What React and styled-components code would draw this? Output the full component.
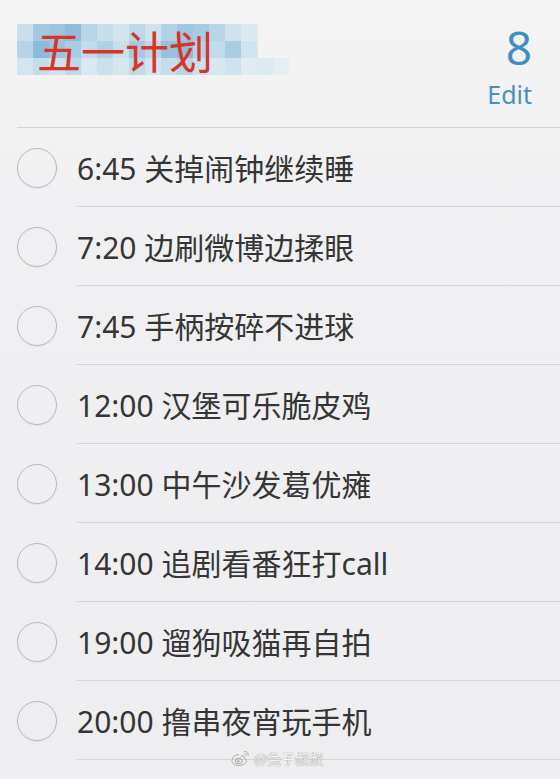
import React from "react";
import styled, { createGlobalStyle } from "styled-components";

const GlobalStyle = createGlobalStyle`
  html, body {
    margin: 0;
    padding: 0;
    background: #f0f0f2;
  }
  body {
    font-family: "Noto Sans", "Noto Sans CJK SC", sans-serif;
  }
`;

const Page = styled.div`
  position: relative;
  width: 560px;
  height: 779px;
  overflow: hidden;
  background: linear-gradient(180deg, #f4f4f5 0%, #f0f0f2 30%, #eeeef0 100%);
`;

const Header = styled.header`
  position: relative;
  display: flex;
  justify-content: space-between;
  align-items: flex-start;
  height: 127px;
  margin-left: 17px;
  border-bottom: 1px solid #d4d4d6;
`;

const Mosaic = styled.svg`
  position: absolute;
  left: 0;
  top: 24px;
`;

const Title = styled.h1`
  position: relative;
  margin: 28px 0 0 20px;
  font-family: "Noto Sans CJK SC", sans-serif;
  font-size: 44px;
  line-height: 44px;
  font-weight: 400;
  color: #d8342a;
`;

const Side = styled.div`
  display: flex;
  flex-direction: column;
  align-items: flex-end;
  padding-right: 28px;
`;

const Count = styled.div`
  margin-top: 24px;
  font-size: 46px;
  line-height: 46px;
  color: #3f8fc4;
`;

const EditButton = styled.div`
  margin-top: 12px;
  font-size: 25px;
  line-height: 25px;
  color: #4a90c1;
`;

const List = styled.ul`
  margin: 0;
  padding: 0;
  list-style: none;
`;

const Row = styled.li`
  display: flex;
  align-items: center;
  padding-left: 17px;
`;

const Check = styled.span`
  flex: none;
  box-sizing: border-box;
  width: 40px;
  height: 40px;
  margin-right: 20px;
  border-radius: 50%;
  border: 1.5px solid #b9b9bb;
  box-shadow: 0 1px 1px rgba(0, 0, 0, 0.05);
`;

const Content = styled.div`
  flex: 1;
  display: flex;
  align-items: center;
  height: 78px;
  border-bottom: 1px solid #d6d6d8;
`;

const Label = styled.span`
  font-size: 30px;
  color: #353535;
  white-space: nowrap;
`;

const Watermark = styled.div`
  position: absolute;
  left: 231px;
  top: 748px;
  display: flex;
  align-items: center;
  gap: 3px;
  font-family: "Noto Sans CJK SC", sans-serif;
  font-size: 14px;
  color: #f4f4f4;
  text-shadow: 0 0 1px #9a9a9a, 0 0 1px #9a9a9a;
`;

const rows = [
  "6:45 关掉闹钟继续睡",
  "7:20 边刷微博边揉眼",
  "7:45 手柄按碎不进球",
  "12:00 汉堡可乐脆皮鸡",
  "13:00 中午沙发葛优瘫",
  "14:00 追剧看番狂打call",
  "19:00 遛狗吸猫再自拍",
  "20:00 撸串夜宵玩手机",
];

const tiles = [
  ["#c9dfec", "#a3c8df", "#9ec5de", "#8fbcd9", "#b7d5e7", "#c7deeb", "#d2e5ef", "#bcd8e9", "#cfe3ee", "#b2d2e6", "#9fc7df", "#a7cbe1", "#b8d6e8", "#cde2ed", "#dbe9f1"],
  ["#b5d4e6", "#8cbad8", "#9cc4dd", "#a9cce2", "#c1dbea", "#b0d1e5", "#c9dfec", "#a6cae1", "#bad7e8", "#98c2dc", "#8ebcd9", "#b4d3e6", "#c3dceb", "#aacde2", "#d0e4ef"],
  ["#d3e6f0", "#c4ddeb", "#cfe3ee", "#bcd8e9", "#d9e9f1", "#cae0ec", "#d6e7f0", "#c0daea", "#d1e4ef", "#c6deeb", "#b9d6e8", "#cce1ed", "#d8e8f1", "#cfe3ee", "#dfecf3", "#dcebf2", "#e4eff4"],
];

const MosaicBlocks = () => (
  <Mosaic width="275" height="51" viewBox="0 0 275 51">
    {tiles.map((line, r) =>
      line.map((c, i) => (
        <rect key={`${r}-${i}`} x={i * 16} y={r * 17} width="16.5" height="17.5" fill={c} />
      ))
    )}
  </Mosaic>
);

const WeiboLogo = () => (
  <svg width="20" height="18" viewBox="0 0 20 18" fill="none" stroke="#a8a8a8" strokeWidth="1">
    <path d="M8 5.5c-3.5 0-7 2.8-7 6 0 3 3.3 5 7.2 5 4.2 0 7.3-2.3 7.3-4.8 0-1.6-1.4-2.3-2.4-2.5 0.6-1.5 0.2-3-2-2.3-1.2 0.4-1.6 0.9-1.6 0.9" />
    <ellipse cx="7.8" cy="12" rx="3.6" ry="2.7" />
    <circle cx="7.2" cy="12.3" r="1" />
    <path d="M13 2.5c2.3-0.4 4.6 1.4 4.3 4" />
    <path d="M13.3 4.6c1.1-0.2 2.2 0.7 2 1.9" />
  </svg>
);

export default function App() {
  return (
    <>
      <GlobalStyle />
      <Page>
        <Header>
          <MosaicBlocks />
          <Title>五一计划</Title>
          <Side>
            <Count>8</Count>
            <EditButton>Edit</EditButton>
          </Side>
        </Header>
        <List>
          {rows.map((text) => (
            <Row key={text}>
              <Check />
              <Content>
                <Label>{text}</Label>
              </Content>
            </Row>
          ))}
        </List>
        <Watermark>
          <WeiboLogo />
          <span>@兔子叔叔</span>
        </Watermark>
      </Page>
    </>
  );
}
